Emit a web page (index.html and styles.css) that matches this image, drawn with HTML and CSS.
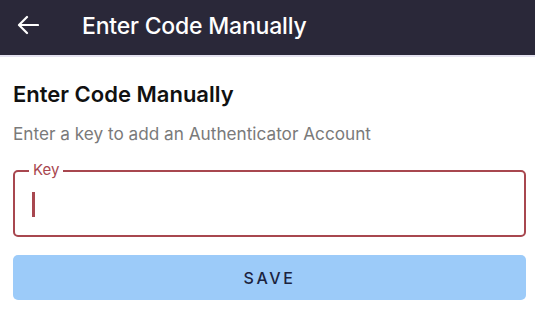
FILE: index.html
```html
<!DOCTYPE html>
<html>
<head>
<meta charset="utf-8">
<link rel="stylesheet" href="styles.css">
</head>
<body>
<header class="topbar">
  <button class="back" aria-label="Back">
    <svg width="22" height="20" viewBox="0 0 22 20"><path d="M21 10H2.5M10 2 2 10l8 8" fill="none" stroke="#fff" stroke-width="2.2" stroke-linecap="round" stroke-linejoin="round"/></svg>
  </button>
  <h1 class="title">Enter Code Manually</h1>
</header>
<main class="content">
  <h2 class="heading">Enter Code Manually</h2>
  <p class="sub">Enter a key to add an Authenticator Account</p>
  <div class="field">
    <span class="label">Key</span>
    <span class="caret"></span>
  </div>
  <button class="save">SAVE</button>
</main>
</body>
</html>
```
FILE: styles.css
```css
* { box-sizing: border-box; }
html, body { margin: 0; padding: 0; background: #fff; }
body { font-family: Inter, Roboto, "Noto Sans", sans-serif; width: 535px; height: 321px; overflow: hidden; }
.topbar {
  height: 57px;
  background: #2a2839;
  border-bottom: 2px solid #e4e2f0;
  display: flex;
  align-items: center;
  padding: 0 0 4px 17px;
}
.back { background: none; border: 0; padding: 0; width: 22px; height: 20px; display: flex; margin-right: 43px; margin-bottom: 2px; }
.title { margin: 0; color: #fff; font-size: 23px; font-weight: 500; letter-spacing: -0.2px; line-height: 28px; }
.content { padding: 23px 9px 0 13px; }
.heading { margin: 0; font-size: 22px; font-weight: 600; color: #111; line-height: 28px; }
.sub { margin: 15px 0 0; font-size: 17.2px; color: #7a7a7a; line-height: 22px; }
.field {
  margin: 25px 0 0;
  height: 67px;
  border: 2px solid #a8474f;
  border-radius: 5px;
  padding: 20px 0 0 17px;
  position: relative;
}
.label {
  position: absolute;
  left: 14px;
  top: -10px;
  background: #fff;
  color: #a8474f;
  font-size: 15px;
  padding: 0 4px;
  line-height: 16px;
}
.caret { display: block; width: 3px; height: 25px; background: #a8474f; }
.save {
  display: block;
  margin-top: 18px;
  width: 100%;
  height: 45px;
  border: 0;
  border-radius: 5px;
  background: #9ccbf9;
  color: #1b2340;
  font-family: inherit;
  font-size: 16px;
  font-weight: 500;
  letter-spacing: 2.6px;
}
```
